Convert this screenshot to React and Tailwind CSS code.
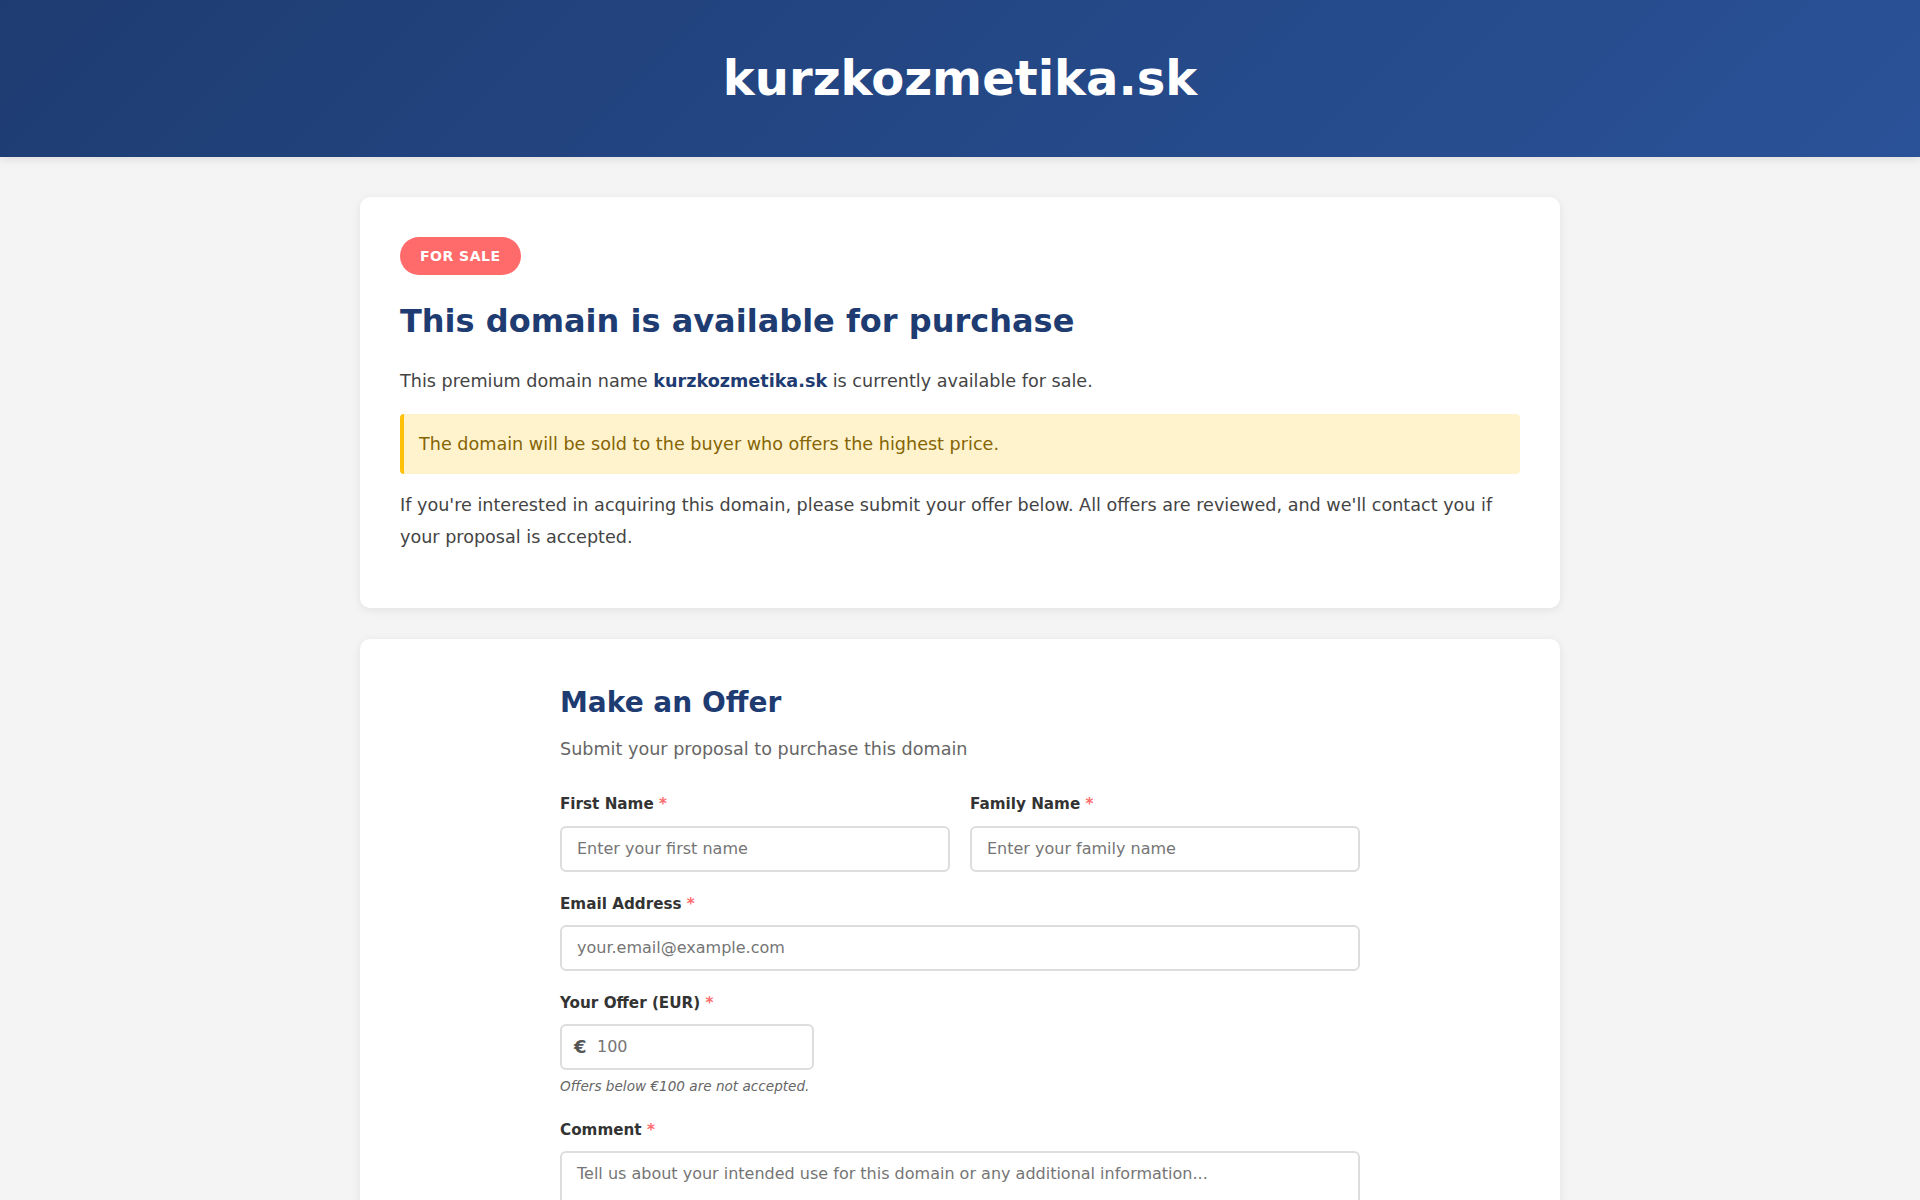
import { useState } from "react";

export default function App() {
  const [form, setForm] = useState({ firstName: "", familyName: "", email: "", offer: "", comment: "" });

  const update = (key) => (e) => setForm({ ...form, [key]: e.target.value });

  const inputClass =
    "block w-full border-2 border-[#ddd] rounded-[6px] bg-white px-[15px] py-[11px] text-[16px] leading-[20px] text-[#333] placeholder:text-[#757575] outline-none focus:border-[#2a5298]";

  const Label = ({ children }) => (
    <label className="block mb-[9px] text-[15.2px] font-bold leading-[1.6] text-[#333]">
      {children} <span className="text-[#ff6b6b]">*</span>
    </label>
  );

  return (
    <div className="min-h-screen bg-[#f4f4f4] font-['DejaVu_Sans','Liberation_Sans',sans-serif] text-[#444]">
      {/* Header */}
      <header className="bg-[linear-gradient(135deg,#1e3c72_0%,#2a5298_100%)] pt-[50px] pb-[49px] text-center shadow-[0_2px_10px_rgba(0,0,0,0.1)]">
        <h1 className="text-[48px] font-bold leading-[1.2] text-white">kurzkozmetika.sk</h1>
      </header>

      <main className="max-w-[1200px] mx-auto mt-10 pb-10">
        {/* Domain info */}
        <section className="bg-white rounded-[10px] px-10 pt-10 pb-[38px] shadow-[0_2px_10px_rgba(0,0,0,0.08)]">
          <div className="flex mb-[27px]">
            <span className="inline-block rounded-full bg-[#ff6b6b] px-5 py-2 text-[14px] font-bold leading-[22.4px] tracking-[0.5px] uppercase text-white">
              For Sale
            </span>
          </div>
          <h2 className="mb-[26px] text-[32px] font-bold leading-[1.2] text-[#1e3c72]">
            This domain is available for purchase
          </h2>
          <p className="mb-4 text-[17.6px] leading-[1.8] text-[#444]">
            This premium domain name <strong className="font-bold text-[#1e3c72]">kurzkozmetika.sk</strong> is currently available for sale.
          </p>
          <div className="mb-4 rounded-[4px] border-l-4 border-[#ffc107] bg-[#fff3cd] py-4 pl-[15px] pr-4 text-[17.6px] leading-[1.6] text-[#856404]">
            The domain will be sold to the buyer who offers the highest price.
          </div>
          <p className="mb-4 text-[17.6px] leading-[1.8] text-[#444]">
            If you're interested in acquiring this domain, please submit your offer below. All offers are reviewed, and we'll contact you if your proposal is accepted.
          </p>
        </section>

        {/* Offer form */}
        <section className="mt-[31px] bg-white rounded-[10px] px-10 pt-[47px] pb-10 shadow-[0_2px_10px_rgba(0,0,0,0.08)]">
          <div className="max-w-[800px] mx-auto">
            <h2 className="mb-4 text-[28px] font-bold leading-[1.2] text-[#1e3c72]">Make an Offer</h2>
            <p className="mb-[29px] text-[17.6px] leading-[1.6] text-[#666]">Submit your proposal to purchase this domain</p>

            <form onSubmit={(e) => e.preventDefault()}>
              <div className="grid grid-cols-2 gap-5">
                <div className="mb-5">
                  <Label>First Name</Label>
                  <input type="text" value={form.firstName} onChange={update("firstName")} placeholder="Enter your first name" className={inputClass} />
                </div>
                <div className="mb-5">
                  <Label>Family Name</Label>
                  <input type="text" value={form.familyName} onChange={update("familyName")} placeholder="Enter your family name" className={inputClass} />
                </div>
              </div>

              <div className="mb-5">
                <Label>Email Address</Label>
                <input type="email" value={form.email} onChange={update("email")} placeholder="your.email@example.com" className={inputClass} />
              </div>

              <div className="mb-5">
                <Label>Your Offer (EUR)</Label>
                <div className="relative w-[254px]">
                  <span className="absolute left-[14px] top-1/2 -translate-y-1/2 text-[18px] font-bold leading-none text-[#555]">€</span>
                  <input
                    type="number"
                    min="100"
                    value={form.offer}
                    onChange={update("offer")}
                    placeholder="100"
                    className="block w-full border-2 border-[#ddd] rounded-[6px] bg-white pl-[35px] pr-[15px] py-[11px] text-[16px] leading-[20px] text-[#333] placeholder:text-[#757575] outline-none focus:border-[#2a5298]"
                  />
                </div>
                <p className="mt-[6px] text-[13.6px] italic leading-[1.6] text-[#666]">Offers below €100 are not accepted.</p>
              </div>

              <div className="mb-5">
                <Label>Comment</Label>
                <textarea
                  rows={5}
                  value={form.comment}
                  onChange={update("comment")}
                  placeholder="Tell us about your intended use for this domain or any additional information..."
                  className={inputClass + " resize-y min-h-[120px]"}
                />
              </div>

              <button
                type="submit"
                className="w-full rounded-[6px] bg-[linear-gradient(135deg,#1e3c72_0%,#2a5298_100%)] py-[14px] text-[17.6px] font-bold text-white"
              >
                Submit Offer
              </button>
            </form>
          </div>
        </section>
      </main>
    </div>
  );
}
